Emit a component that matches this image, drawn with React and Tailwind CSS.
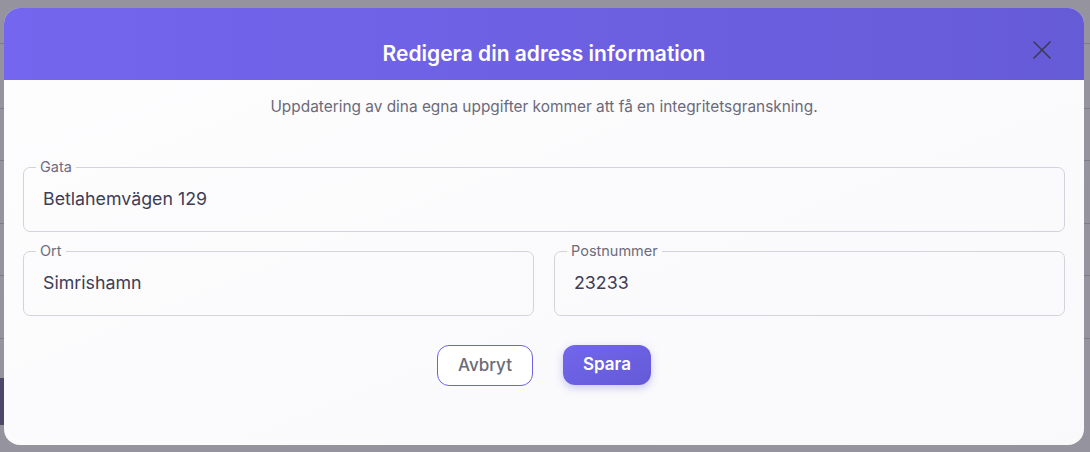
import { X } from 'lucide-react';

const rows = [44, 65, 52, 63, 52, 63];

function Field({ label, value, className = '' }) {
  return (
    <fieldset className={`border border-[#d3d3db] rounded-[7px] px-[19px] pb-2 min-w-0 ${className}`}>
      <legend className="ml-[-7px] px-[4px] text-[14.5px] leading-4 text-[#6d6c7c]">{label}</legend>
      <div className="h-[48px] flex items-center text-[17.8px] text-[#3f3d56]">{value}</div>
    </fieldset>
  );
}

export default function App() {
  return (
    <div className="relative w-[1090px] h-[452px] overflow-hidden bg-[#95939e]" style={{ fontFamily: 'Inter, "Noto Sans", sans-serif' }}>
      {/* page behind the backdrop */}
      <div className="flex flex-col">
        {rows.map((h, i) => (
          <div key={i} className="border-b border-[#7f7d89]" style={{ height: h }} />
        ))}
        <div className="h-[39px]" />
        <div className="h-[47px] w-[6px] bg-[#4b4868]" />
      </div>

      <div className="absolute left-[4px] top-[8px] w-[1080px] h-[437px] rounded-[16px] overflow-hidden bg-gradient-to-br from-[#fdfdfe] to-[#f9f9fb] flex flex-col">
        <div className="relative h-[72px] bg-gradient-to-r from-[#7466ee] to-[#665bd7] pt-[32px] text-center">
          <h1 className="text-[21px] leading-7 font-semibold text-white">Redigera din adress information</h1>
          <button className="absolute right-[26px] top-[26px] text-[#3c3a52]">
            <X size={32} strokeWidth={1.15} />
          </button>
        </div>

        <div className="px-[19px]">
          <p className="pt-[17px] text-center text-[15.4px] leading-5 text-[#6b6a79]">
            Uppdatering av dina egna uppgifter kommer att få en integritetsgranskning.
          </p>

          <div className="mt-[42px] flex flex-col gap-[11px]">
            <Field label="Gata" value="Betlahemvägen 129" />
            <div className="grid grid-cols-2 gap-[20px]">
              <Field label="Ort" value="Simrishamn" />
              <Field label="Postnummer" value="23233" />
            </div>
          </div>

          <div className="mt-[29px] flex justify-center gap-[30px]">
            <button className="w-[96px] h-[41px] rounded-[12px] border border-[#6d63e2] text-[17px] font-medium text-[#6b6a79] bg-white">
              Avbryt
            </button>
            <button className="w-[88px] h-[40px] rounded-[12px] bg-gradient-to-br from-[#7266ec] to-[#645ad6] text-[17px] font-semibold text-white shadow-[0_3px_8px_rgba(108,99,226,0.35)]">
              Spara
            </button>
          </div>
        </div>
      </div>
    </div>
  );
}
